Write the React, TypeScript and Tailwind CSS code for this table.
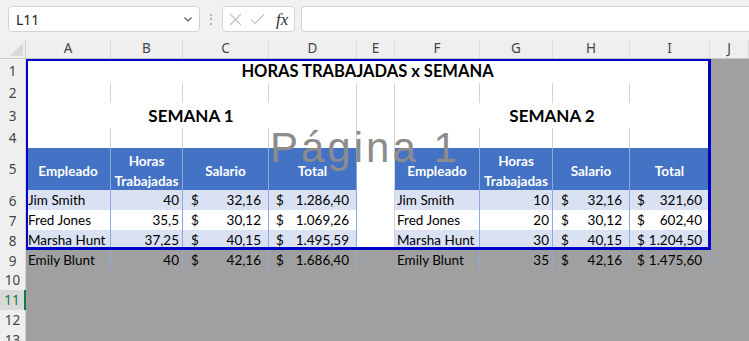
import React from "react";

const COLS = "grid grid-cols-[26px_85px_72px_86px_88px_38px_85px_73px_77px_80px_1fr]";
const GRID = "border-r border-b border-[#d4d4d4]";
const TBL = "border-r border-b border-[#8eaadb]";

type Row = { name: string; hours: string; rate: string; total: string };

const semana1: Row[] = [
  { name: "Jim Smith", hours: "40", rate: "32,16", total: "1.286,40" },
  { name: "Fred Jones", hours: "35,5", rate: "30,12", total: "1.069,26" },
  { name: "Marsha Hunt", hours: "37,25", rate: "40,15", total: "1.495,59" },
  { name: "Emily Blunt", hours: "40", rate: "42,16", total: "1.686,40" },
];

const semana2: Row[] = [
  { name: "Jim Smith", hours: "10", rate: "32,16", total: "321,60" },
  { name: "Fred Jones", hours: "20", rate: "30,12", total: "602,40" },
  { name: "Marsha Hunt", hours: "30", rate: "40,15", total: "1.204,50" },
  { name: "Emily Blunt", hours: "35", rate: "42,16", total: "1.475,60" },
];

function RowHead({ n, selected }: { n: number; selected?: boolean }) {
  return (
    <div
      className={`flex items-center justify-center border-r border-b border-[#d4d4d4] text-[13.5px] font-['Noto_Sans',sans-serif] ${
        selected ? "bg-[#d9d9d9] text-[#107c41] border-r-2 border-r-[#107c41]" : "bg-[#efefef] text-[#444]"
      }`}
    >
      {n}
    </div>
  );
}

function Gray() {
  return <div className="bg-[#a0a0a0]" />;
}

function DataCells({ r, bg }: { r: Row; bg: string }) {
  return (
    <>
      <div className={`${TBL} ${bg} flex items-end pb-[1px] pl-[2px] whitespace-nowrap`}>{r.name}</div>
      <div className={`${TBL} ${bg} flex items-end justify-end pb-[1px] pr-[3px]`}>{r.hours}</div>
      <div className={`${TBL} ${bg} flex items-end justify-between pb-[1px] pl-[8px] pr-[7px]`}>
        <span>$</span>
        <span>{r.rate}</span>
      </div>
      <div className={`${TBL} ${bg} flex items-end justify-between gap-[4px] pb-[1px] pl-[7px] pr-[7px]`}>
        <span>$</span>
        <span>{r.total}</span>
      </div>
    </>
  );
}

function HeaderCells() {
  const h = `${TBL} bg-[#4472c4] text-white font-bold flex items-center justify-center text-center pt-[3px]`;
  return (
    <>
      <div className={h}>Empleado</div>
      <div className={`${h} leading-[20px]`}>
        Horas
        <br />
        Trabajadas
      </div>
      <div className={h}>Salario</div>
      <div className={h}>Total</div>
    </>
  );
}

export default function App() {
  const letters = ["A", "B", "C", "D", "E", "F", "G", "H", "I", "J"];
  return (
    <div className="w-[749px] h-[341px] overflow-hidden bg-[#a0a0a0] font-['Lato',sans-serif] text-[13.5px] text-black">
      {/* formula bar */}
      <div className="h-[40px] bg-[#f1f1f1] flex items-start pt-[6px] pl-[8px] gap-[6px]">
        <div className="w-[192px] h-[26px] bg-white border border-[#d3d3d3] rounded-[4px] flex items-center justify-between pl-[7px] pr-[5px] font-['Noto_Sans',sans-serif] text-[14px] text-[#222]">
          <span>L11</span>
          <svg width="12" height="12" viewBox="0 0 12 12" fill="none" stroke="#555" strokeWidth="1.2">
            <path d="M2.5 4.5 L6 8 L9.5 4.5" />
          </svg>
        </div>
        <div className="w-[10px] h-[26px] flex flex-col items-center justify-center gap-[2.5px]">
          <span className="w-[2px] h-[2px] rounded-full bg-[#9a9a9a]" />
          <span className="w-[2px] h-[2px] rounded-full bg-[#9a9a9a]" />
          <span className="w-[2px] h-[2px] rounded-full bg-[#9a9a9a]" />
        </div>
        <div className="w-[73px] h-[26px] bg-white border border-[#d3d3d3] rounded-[4px] flex items-center pl-[6px] gap-[8px]">
          <svg width="13" height="13" viewBox="0 0 13 13" stroke="#c2c2c2" strokeWidth="1.1">
            <path d="M1 1 L12 12 M12 1 L1 12" />
          </svg>
          <svg width="15" height="12" viewBox="0 0 15 12" fill="none" stroke="#c2c2c2" strokeWidth="1.1">
            <path d="M1 6.5 L5 10.5 L14 1.5" />
          </svg>
          <span className="font-['Liberation_Serif',serif] italic text-[17px] text-[#333] leading-none ml-[3px]">fx</span>
        </div>
        <div className="flex-1 h-[26px] bg-white border border-[#d3d3d3] rounded-l-[4px] border-r-0" />
      </div>

      {/* sheet */}
      <div className="relative">
        {/* column headers */}
        <div className={`${COLS} h-[19px] bg-[#efefef] border-b border-[#c8c8c8] font-['Noto_Sans',sans-serif] text-[13.5px] text-[#444]`}>
          <div className="relative border-r border-[#d4d4d4]">
            <svg className="absolute left-[10px] top-[3px]" width="13" height="13" viewBox="0 0 13 13">
              <path d="M13 0 L13 13 L0 13 Z" fill="#d9d9d9" />
            </svg>
          </div>
          {letters.map((l) => (
            <div key={l} className="flex items-center justify-center border-r border-[#dadada] leading-none">
              {l}
            </div>
          ))}
        </div>

        {/* row 1 */}
        <div className={`${COLS} h-[24px]`}>
          <RowHead n={1} />
          <div className={`col-span-9 bg-white ${GRID} flex items-center justify-center font-bold text-[16.5px]`}>
            HORAS TRABAJADAS x SEMANA
          </div>
          <Gray />
        </div>

        {/* row 2 */}
        <div className={`${COLS} h-[20px]`}>
          <RowHead n={2} />
          {Array.from({ length: 9 }).map((_, i) => (
            <div key={i} className={`bg-white ${GRID}`} />
          ))}
          <Gray />
        </div>

        {/* row 3 */}
        <div className={`${COLS} h-[25px]`}>
          <RowHead n={3} />
          <div className={`col-span-4 bg-white ${GRID} flex items-center justify-center font-bold text-[17px]`}>SEMANA 1</div>
          <div className={`bg-white ${GRID}`} />
          <div className={`col-span-4 bg-white ${GRID} flex items-center justify-center font-bold text-[17px]`}>SEMANA 2</div>
          <Gray />
        </div>

        {/* row 4 */}
        <div className={`${COLS} h-[20px]`}>
          <RowHead n={4} />
          {Array.from({ length: 9 }).map((_, i) => (
            <div key={i} className={`bg-white ${GRID}`} />
          ))}
          <Gray />
        </div>

        {/* row 5 */}
        <div className={`${COLS} h-[42px]`}>
          <RowHead n={5} />
          <HeaderCells />
          <div className={`bg-white ${GRID}`} />
          <HeaderCells />
          <Gray />
        </div>

        {/* rows 6-8 */}
        {[0, 1, 2].map((i) => {
          const bg = i === 1 ? "bg-white" : "bg-[#d9e1f2]";
          return (
            <div key={i} className={`${COLS} h-[20px]`}>
              <RowHead n={6 + i} />
              <DataCells r={semana1[i]} bg={bg} />
              <div className={`bg-white ${GRID}`} />
              <DataCells r={semana2[i]} bg={bg} />
              <Gray />
            </div>
          );
        })}

        {/* row 9, outside print area */}
        <div className={`${COLS} h-[20px]`}>
          <RowHead n={9} />
          <DataCells r={semana1[3]} bg="bg-[#a0a0a0]" />
          <div className="bg-[#a0a0a0]" />
          <DataCells r={semana2[3]} bg="bg-[#a0a0a0]" />
          <Gray />
        </div>

        {[10, 11, 12, 13].map((n) => (
          <div key={n} className={`${COLS} h-[20px]`}>
            <RowHead n={n} selected={n === 11} />
            <div className="col-span-10 bg-[#a0a0a0]" />
          </div>
        ))}

        {/* print area border */}
        <div className="absolute left-[26px] top-[19px] w-[685px] h-[191px] border-t-2 border-l-2 border-r-[3px] border-b-[3px] border-[#0000c8] pointer-events-none" />

        {/* page watermark */}
        <div className="absolute left-[270px] top-[87px] font-['Liberation_Sans',sans-serif] text-[42px] leading-[42px] tracking-[3px] text-[#8c8c8c] pointer-events-none whitespace-nowrap">
          Página 1
        </div>
      </div>
    </div>
  );
}
